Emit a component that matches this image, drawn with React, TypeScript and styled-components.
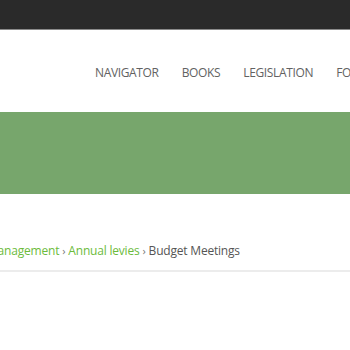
import styled, { createGlobalStyle } from 'styled-components';

const GlobalStyle = createGlobalStyle`
  html, body {
    margin: 0;
    padding: 0;
    background: #ffffff;
    overflow: hidden;
    font-family: 'Open Sans', 'Liberation Sans', sans-serif;
  }
`;

const Page = styled.div`
  width: 350px;
  height: 350px;
  overflow: hidden;
  display: flex;
  flex-direction: column;
`;

const TopBar = styled.div`
  height: 29px;
  background: #2a2a2a;
  border-bottom: 1px solid #8a8a8a;
`;

const Header = styled.header`
  height: 82px;
  display: flex;
  align-items: center;
  padding-left: 95px;
  white-space: nowrap;
`;

const NavList = styled.nav`
  display: flex;
  gap: 23px;
  margin-top: 2px;
`;

const NavItem = styled.a`
  font-size: 12px;
  letter-spacing: -0.35px;
  color: #626262;
  text-transform: uppercase;
  text-decoration: none;
`;

const Banner = styled.div`
  height: 82px;
  background: #77a66c;
`;

const Crumbs = styled.div`
  margin-top: 48px;
  margin-left: -13px;
  padding-bottom: 11px;
  border-bottom: 2px solid #ececec;
  font-size: 12px;
  letter-spacing: -0.2px;
  white-space: nowrap;
  color: #555555;
`;

const CrumbLink = styled.a`
  color: #6cbb3c;
  text-decoration: none;
`;

const Sep = styled.span`
  color: #777777;
  margin: 0 3px;
  font-size: 11px;
`;

const navItems = ['Navigator', 'Books', 'Legislation', 'Forms'];

export default function App() {
  return (
    <Page>
      <GlobalStyle />
      <TopBar />
      <Header>
        <NavList>
          {navItems.map((item) => (
            <NavItem key={item}>{item}</NavItem>
          ))}
        </NavList>
      </Header>
      <Banner />
      <Crumbs>
        <CrumbLink>Management</CrumbLink>
        <Sep>›</Sep>
        <CrumbLink>Annual levies</CrumbLink>
        <Sep>›</Sep>
        <span>Budget Meetings</span>
      </Crumbs>
    </Page>
  );
}
